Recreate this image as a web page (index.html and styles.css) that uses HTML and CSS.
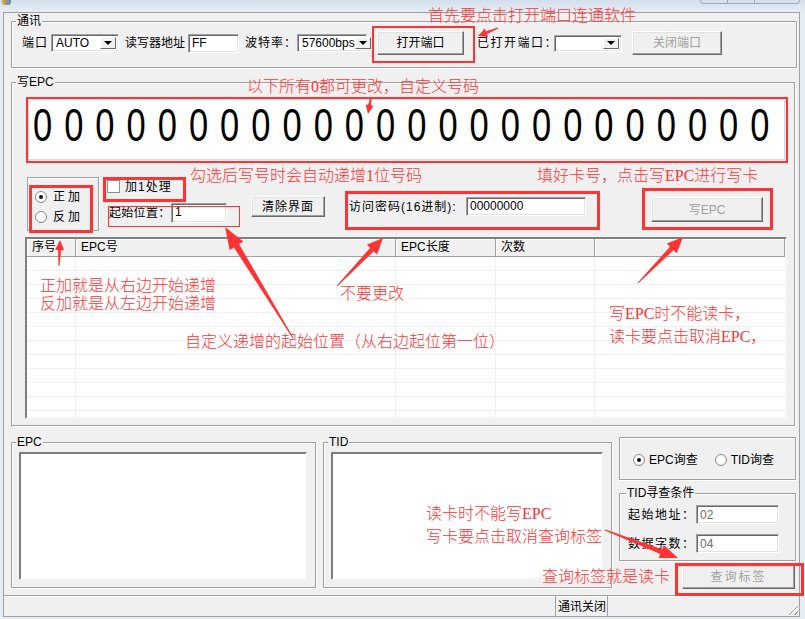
FILE: index.html
```html
<!DOCTYPE html>
<html lang="zh-CN">
<head>
<meta charset="utf-8">
<title>读写软件</title>
<link rel="stylesheet" href="styles.css">
</head>
<body>
<div class="titlebar"><span class="app-icon"></span><span class="caption-btns"></span></div>
<div class="client">
  <div class="group comm">
    <span class="legend">通讯</span>
    <div class="comm-row">
      <span class="lbl w-port">端口</span>
      <div class="combo c-port"><span class="val">AUTO</span><span class="drop"></span></div>
      <span class="lbl w-addr">读写器地址</span>
      <div class="edit e-addr">FF</div>
      <span class="lbl w-baud">波特率：</span>
      <div class="combo c-baud"><span class="val">57600bps</span><span class="drop"></span></div>
      <div class="btn b-open">打开端口</div>
      <span class="lbl w-opened">已打开端口：</span>
      <div class="combo c-opened"><span class="val"></span><span class="drop"></span></div>
      <div class="btn disabled b-close">关闭端口</div>
    </div>
  </div>

  <div class="group write">
    <span class="legend">写EPC</span>
    <div class="epc-box"><span class="epc-digits">000000000000000000000000</span></div>
    <div class="ctrl-row">
      <div class="group radio-box">
        <div class="opt"><span class="radio on"></span><span class="opt-t">正加</span></div>
        <div class="opt"><span class="radio"></span><span class="opt-t">反加</span></div>
      </div>
      <div class="chk-col">
        <div class="chk-row"><span class="check"></span><span class="chk-t">加1处理</span></div>
        <div class="start-row"><span class="lbl w-start">起始位置：</span><div class="edit e-start">1</div></div>
      </div>
      <div class="btn b-clear">清除界面</div>
      <div class="pwd"><span class="lbl w-pwd">访问密码(16进制):</span><div class="edit e-pwd">00000000</div></div>
      <div class="btn disabled b-write">写EPC</div>
    </div>
    <div class="listview">
      <div class="lv-head">
        <span class="hc col1">序号</span>
        <span class="hc col2">EPC号</span>
        <span class="hc col3">EPC长度</span>
        <span class="hc col4">次数</span>
        <span class="hc col5"></span>
      </div>
      <div class="lv-body">
        <span class="bc col1"></span>
        <span class="bc col2"></span>
        <span class="bc col3"></span>
        <span class="bc col4"></span>
        <span class="bc col5"></span>
      </div>
    </div>
  </div>

  <div class="bottom">
    <div class="group g-epc">
      <span class="legend">EPC</span>
      <div class="memo m-epc"></div>
    </div>
    <div class="group g-tid">
      <span class="legend">TID</span>
      <div class="memo m-tid"></div>
    </div>
    <div class="right-col">
      <div class="group mode-box">
        <div class="opt2"><span class="radio on"></span><span class="opt2-t">EPC询查</span></div>
        <div class="opt2 second"><span class="radio"></span><span class="opt2-t">TID询查</span></div>
      </div>
      <div class="group tid-cond">
        <span class="legend">TID寻查条件</span>
        <div class="cond-row first"><span class="lbl w-cond">起始地址：</span><div class="edit e-cond">02</div></div>
        <div class="cond-row"><span class="lbl w-cond">数据字数：</span><div class="edit e-cond">04</div></div>
      </div>
      <div class="btn disabled b-query">查询标签</div>
    </div>
  </div>

  <div class="statusbar">
    <span class="sb-main"></span>
    <span class="sb-p2">通讯关闭</span>
    <span class="sb-p3"><span class="grip"></span></span>
  </div>
</div>

<div class="overlay">
  <svg class="arrows" width="805" height="619" viewBox="0 0 805 619">
    <polygon points="497.8,27.5 485.8,31.3 484.7,28.5 478,36 488.1,36.9 487.0,34.1 498.2,28.5"/>
    <polygon points="370.5,96.9 368.1,104.8 365.7,104.4 368,114 373.5,105.8 371.1,105.4 371.5,97.1"/>
    <polygon points="59.5,266 61.1,250 64.1,250.2 60,240 55.1,249.8 58.1,250 58.5,266"/>
    <polygon points="293.4,337.7 239.1,244.2 243.3,241.6 225,227 229.7,250.0 233.9,247.4 292.6,338.3"/>
    <polygon points="337.4,286.3 373.7,251.3 377.0,254.4 383,238 366.8,244.8 370.1,247.9 336.6,285.7"/>
    <polygon points="638.4,283.3 673.6,250.1 676.8,253.3 683,237 666.8,243.5 670.0,246.7 637.6,282.7"/>
    <polygon points="604.8,530.5 660.3,553.9 658.7,558.1 678,558 663.7,545.1 662.1,549.3 605.2,529.5"/>
  </svg>
  <div class="rbox r-open"></div>
  <div class="rbox r-epc"></div>
  <div class="rbox r-radio"></div>
  <div class="rbox r-chk"></div>
  <div class="rbox r-start"></div>
  <div class="rbox r-pwd"></div>
  <div class="rbox r-write"></div>
  <div class="rbox r-query"></div>

  <div class="note n1">首先要点击打开端口连通软件</div>
  <div class="note n2">以下所有0都可更改，自定义号码</div>
  <div class="note n3">勾选后写号时会自动递增1位号码</div>
  <div class="note n4">填好卡号，点击写EPC进行写卡</div>
  <div class="note n5">正加就是从右边开始递增<br>反加就是从左边开始递增</div>
  <div class="note n6">不要更改</div>
  <div class="note n7">自定义递增的起始位置（从右边起位第一位）</div>
  <div class="note n8">写EPC时不能读卡，<br>读卡要点击取消EPC，</div>
  <div class="note n9">读卡时不能写EPC<br>写卡要点击取消查询标签</div>
  <div class="note n10">查询标签就是读卡</div>
</div>
</body>
</html>
```
FILE: styles.css
```css
* { box-sizing: border-box; }
html, body { margin: 0; padding: 0; }
body {
  width: 805px;
  height: 619px;
  overflow: hidden;
  position: relative;
  background: #e6ecf3;
  font-family: "Liberation Sans", "Noto Sans CJK SC", sans-serif;
  font-size: 12px;
  line-height: 14px;
  color: #000;
}

/* title bar */
.titlebar {
  height: 12px;
  display: flex;
  align-items: flex-start;
  background: linear-gradient(#d3dfec, #e6edf5);
}
.app-icon {
  width: 9px; height: 5px; margin-left: 2px;
  background: linear-gradient(90deg, #d9a93a, #5f86b8);
  border-radius: 0 0 3px 3px;
}
.caption-btns {
  margin-left: auto; margin-right: 5px;
  width: 100px; height: 4px;
  border: 1px solid #9aa9bb; border-top: 0;
  border-radius: 0 0 4px 4px;
  background: linear-gradient(90deg, transparent 26px, #9aa9bb 26px 27px, transparent 27px 53px, #9aa9bb 53px 54px, transparent 54px);
}

/* client */
.client {
  margin-left: 3px;
  width: 797px;
  height: 605px;
  background: #f0f0f0;
  border-left: 1px solid #a0a0a0;
  border-top: 1px solid #a0a0a0;
  border-right: 1px solid #a0a0a0;
}

.group {
  position: relative;
  border: 1px solid #a0a0a0;
  box-shadow: inset 1px 1px #fff, 1px 1px #fff;
}
.legend {
  position: absolute;
  top: -8px; left: 4px;
  padding: 0 1px;
  background: #f0f0f0;
  line-height: 15px;
  white-space: nowrap;
}

.lbl { white-space: nowrap; flex: none; }

.edit {
  flex: none;
  display: flex; align-items: center;
  background: #fff;
  border: 1px solid; border-color: #a0a0a0 #fff #fff #a0a0a0;
  box-shadow: inset 1px 1px #696969, inset -1px -1px #e3e3e3;
  padding-left: 3px;
  white-space: nowrap;
}
.combo {
  flex: none;
  display: flex;
  background: #fff;
  border: 1px solid; border-color: #a0a0a0 #fff #fff #a0a0a0;
  box-shadow: inset 1px 1px #696969, inset -1px -1px #e3e3e3;
  padding: 2px;
}
.combo .val { flex: 1; display: flex; align-items: center; padding-left: 2px; white-space: nowrap; }
.combo .drop {
  width: 16px; flex: none;
  display: flex; align-items: center; justify-content: center;
  background: #f0f0f0;
  border: 1px solid; border-color: #fff #696969 #696969 #fff;
}
.combo .drop::after {
  content: "";
  border-left: 4px solid transparent;
  border-right: 4px solid transparent;
  border-top: 4px solid #000;
}

.btn {
  flex: none;
  display: flex; align-items: center; justify-content: center;
  background: #f0f0f0;
  border: 1px solid; border-color: #fff #696969 #696969 #fff;
  box-shadow: inset -1px -1px #a0a0a0, inset 1px 1px #e3e3e3;
  white-space: nowrap;
}
.btn.disabled { color: #a0a0a0; }

/* comm group */
.comm { margin: 8px 0 0 7px; width: 786px; height: 47px; }
.comm-row { display: flex; align-items: center; height: 24px; margin-top: 9px; padding-left: 10px; }
.w-port { width: 24px; letter-spacing: 1px; }
.c-port { margin-left: 5px; width: 68px; height: 18px; }
.w-addr { margin-left: 6px; width: 60px; }
.e-addr { margin-left: 3px; width: 51px; height: 19px; align-items: flex-start; padding-top: 1px; }
.w-baud { margin-left: 6px; width: 50px; letter-spacing: 1px; }
.c-baud { margin-left: 2px; width: 70px; height: 18px; }
.b-open { margin-left: 10px; width: 87px; height: 24px; }
.w-opened { margin-left: 13px; width: 76px; letter-spacing: 1.5px; }
.c-opened { margin-left: 1px; width: 68px; height: 17px; }
.b-close { margin-left: 10px; width: 90px; height: 24px; }

/* write group */
.write { margin: 14px 0 0 7px; width: 784px; height: 344px; }
.epc-box {
  margin: 16px 0 0 16px;
  width: 757px; height: 61px;
  background: #fff;
  border: 1px solid #d8d8d8;
  overflow: hidden;
  white-space: nowrap;
}
.epc-digits {
  display: inline-block;
  margin-left: 4px;
  transform: scaleX(0.75);
  transform-origin: left top;
  font-family: "Liberation Sans", sans-serif;
  font-size: 46px;
  line-height: 51px;
  letter-spacing: 16px;
  color: #000;
}

.ctrl-row { display: flex; align-items: flex-start; height: 54px; margin-top: 17px; }
.radio-box { margin-left: 15px; width: 72px; height: 54px; padding: 9px 0 0 7px; }
.opt { display: flex; align-items: center; height: 20px; }
.opt-t { margin-left: 6px; letter-spacing: 3px; }
.radio {
  flex: none;
  width: 12px; height: 12px;
  border-radius: 50%;
  border: 1px solid #8a8a8a;
  background: radial-gradient(circle at 40% 40%, #fff 50%, #e4e4e4);
  display: flex; align-items: center; justify-content: center;
}
.radio.on::after {
  content: "";
  width: 4px; height: 4px; border-radius: 50%;
  background: #111;
}
.chk-col { margin-left: 8px; width: 120px; }
.chk-row { display: flex; align-items: center; height: 13px; margin-top: 3px; }
.check {
  width: 13px; height: 13px; flex: none;
  background: #fff;
  border: 1px solid #8e8f8f;
}
.chk-t { margin-left: 5px; letter-spacing: 1px; }
.start-row { display: flex; align-items: center; height: 20px; margin-top: 10px; padding-left: 2px; }
.w-start { width: 62px; letter-spacing: 0.3px; }
.e-start { width: 56px; height: 20px; align-items: flex-start; padding-top: 1px; }
.b-clear { margin: 19px 0 0 24px; width: 74px; height: 21px; letter-spacing: 1px; }
.pwd { display: flex; align-items: center; height: 19px; margin: 20px 0 0 24px; }
.w-pwd { width: 114px; letter-spacing: 1px; }
.e-pwd { margin-left: 3px; width: 120px; height: 19px; align-items: flex-start; padding-top: 1px; }
.b-write { margin: 20px 0 0 65px; width: 112px; height: 25px; }

.listview {
  margin: 6px 0 0 13px;
  width: 762px; height: 182px;
  border: 2px solid; border-color: #7f7f7f #f6f6f6 #f6f6f6 #7f7f7f;
  background: #fff;
}
.lv-head { display: flex; height: 18px; }
.hc {
  flex: none;
  height: 18px;
  line-height: 17px;
  padding-left: 5px;
  background: #f0f0f0;
  border-right: 1px solid #a0a0a0;
  border-bottom: 1px solid #a0a0a0;
  box-shadow: inset 1px 1px #fff;
  white-space: nowrap;
}
.col1 { width: 49px; }
.col2 { width: 320px; }
.col3 { width: 100px; }
.col4 { width: 99px; }
.col5 { flex: 1; }
.lv-body {
  display: flex;
  height: 160px;
  background: repeating-linear-gradient(to bottom, #fff 0 13px, #f0f0f0 13px 14px);
}
.bc { flex: none; border-right: 1px solid #f0f0f0; }
.bc.col5 { flex: 1; border-right: 0; }

/* bottom */
.bottom { display: flex; align-items: flex-start; height: 158px; margin-top: 11px; }
.g-epc { margin: 5px 0 0 7px; width: 305px; height: 146px; }
.g-tid { margin: 5px 0 0 7px; width: 289px; height: 146px; }
.memo {
  margin: 9px 0 0 7px;
  height: 128px;
  background: #fff;
  border: 2px solid; border-color: #7f7f7f #f6f6f6 #f6f6f6 #7f7f7f;
}
.m-epc { width: 288px; }
.m-tid { width: 272px; }

.right-col { margin-left: 7px; width: 177px; }
.mode-box { height: 43px; display: flex; align-items: center; padding: 2px 0 0 13px; }
.opt2 { display: flex; align-items: center; }
.opt2.second { margin-left: 17px; }
.opt2-t { margin-left: 4px; }
.tid-cond { margin-top: 13px; height: 68px; }
.tid-cond .legend { left: 6px; }
.cond-row { display: flex; align-items: center; height: 19px; margin-top: 10px; padding-left: 8px; }
.cond-row.first { margin-top: 11px; }
.w-cond { width: 68px; letter-spacing: 1.5px; }
.e-cond { width: 83px; height: 19px; color: #6d6d6d; }
.b-query { margin: 4px 0 0 63px; width: 113px; height: 24px; letter-spacing: 2px; }

/* status bar */
.statusbar {
  display: flex;
  height: 22px;
  border-top: 1px solid #a0a0a0;
  border-bottom: 1px solid #a0a0a0;
  box-shadow: inset 0 1px #fff;
}
.sb-main { width: 551px; flex: none; }
.sb-p2 {
  width: 53px; flex: none;
  display: flex; align-items: center; padding-left: 2px;
  border-left: 1px solid #a0a0a0;
  border-right: 1px solid #a0a0a0;
  white-space: nowrap;
  font-family: "Noto Sans CJK SC", sans-serif;
}
.sb-p3 { flex: 1; display: flex; align-items: flex-end; justify-content: flex-end; }
.grip {
  width: 12px; height: 12px; margin: 0 1px 1px 0;
  background: repeating-linear-gradient(135deg, transparent 0 2px, #a0a0a0 2px 3px, #fff 3px 4px);
  clip-path: polygon(100% 0, 100% 100%, 0 100%);
}

/* annotation overlay */
.overlay { position: absolute; left: 0; top: 0; width: 805px; height: 619px; pointer-events: none; }
.arrows { position: absolute; left: 0; top: 0; }
.arrows polygon { fill: #f33; }
.rbox { position: absolute; border: 3px solid #f33; }
.r-open { left: 372px; top: 26px; width: 103px; height: 37px; border-width: 2px; }
.r-epc { left: 26px; top: 97px; width: 762px; height: 66px; border-width: 2px; }
.r-radio { left: 29px; top: 185px; width: 64px; height: 48px; }
.r-chk { left: 103px; top: 177px; width: 83px; height: 25px; }
.r-start { left: 108px; top: 206px; width: 132px; height: 21px; border-width: 1px; }
.r-pwd { left: 345px; top: 191px; width: 255px; height: 39px; }
.r-write { left: 642px; top: 188px; width: 131px; height: 42px; }
.r-query { left: 675px; top: 563px; width: 129px; height: 33px; }

.note {
  position: absolute;
  white-space: nowrap;
  color: #f33;
  font-family: "Liberation Serif", "Noto Sans CJK SC", serif;
  font-weight: 300;
  font-size: 16px;
  line-height: 18px;
}
.n1 { left: 428px; top: 7px; }
.n2 { left: 247px; top: 78px; }
.n3 { left: 190px; top: 167px; }
.n4 { left: 537px; top: 167px; }
.n5 { left: 40px; top: 277px; }
.n6 { left: 340px; top: 285px; }
.n7 { left: 185px; top: 333px; }
.n8 { left: 609px; top: 302px; line-height: 23px; }
.n9 { left: 426px; top: 502px; line-height: 23px; }
.n10 { left: 542px; top: 568px; }
```
